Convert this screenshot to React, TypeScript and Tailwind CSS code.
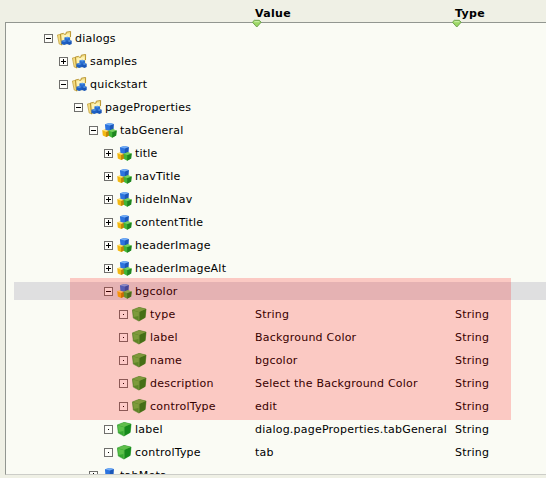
import React from "react";

type Kind = "folder" | "node" | "prop";
type Mark = "minus" | "plus" | "dot";

interface Item {
  level: number;
  mark: Mark;
  kind: Kind;
  name: string;
  value?: string;
  type?: string;
  selected?: boolean;
}

const items: Item[] = [
  { level: 0, mark: "minus", kind: "folder", name: "dialogs" },
  { level: 1, mark: "plus", kind: "folder", name: "samples" },
  { level: 1, mark: "minus", kind: "folder", name: "quickstart" },
  { level: 2, mark: "minus", kind: "folder", name: "pageProperties" },
  { level: 3, mark: "minus", kind: "node", name: "tabGeneral" },
  { level: 4, mark: "plus", kind: "node", name: "title" },
  { level: 4, mark: "plus", kind: "node", name: "navTitle" },
  { level: 4, mark: "plus", kind: "node", name: "hideInNav" },
  { level: 4, mark: "plus", kind: "node", name: "contentTitle" },
  { level: 4, mark: "plus", kind: "node", name: "headerImage" },
  { level: 4, mark: "plus", kind: "node", name: "headerImageAlt" },
  { level: 4, mark: "minus", kind: "node", name: "bgcolor", selected: true },
  { level: 5, mark: "dot", kind: "prop", name: "type", value: "String", type: "String" },
  { level: 5, mark: "dot", kind: "prop", name: "label", value: "Background Color", type: "String" },
  { level: 5, mark: "dot", kind: "prop", name: "name", value: "bgcolor", type: "String" },
  { level: 5, mark: "dot", kind: "prop", name: "description", value: "Select the Background Color", type: "String" },
  { level: 5, mark: "dot", kind: "prop", name: "controlType", value: "edit", type: "String" },
  { level: 4, mark: "dot", kind: "prop", name: "label", value: "dialog.pageProperties.tabGeneral", type: "String" },
  { level: 4, mark: "dot", kind: "prop", name: "controlType", value: "tab", type: "String" },
  { level: 3, mark: "plus", kind: "node", name: "tabMeta" },
];

const indents = ["pl-[38px]", "pl-[53px]", "pl-[68px]", "pl-[83px]", "pl-[98px]", "pl-[113px]"];

function Toggle({ mark }: { mark: Mark }) {
  return (
    <svg width="9" height="9" viewBox="0 0 9 9" shapeRendering="crispEdges" className="shrink-0">
      <rect x="0.5" y="0.5" width="8" height="8" fill="#fdfdf9" stroke="#6f6f6c" />
      {mark !== "dot" && <rect x="2" y="4" width="5" height="1" fill="#000" />}
      {mark === "plus" && <rect x="4" y="2" width="1" height="5" fill="#000" />}
      {mark === "dot" && <rect x="4" y="4" width="1" height="1" fill="#000" />}
    </svg>
  );
}

function FolderIcon() {
  return (
    <svg width="16" height="16" viewBox="0 0 16 16" className="shrink-0">
      <path d="M.4 4 3.4 3.4 5 13.8 2.2 13Z" fill="#f3dd84" stroke="#c09a30" strokeWidth=".7" />
      <path d="M3.4 3 6.6 2.4 7.8 3.4 9 3 9.3 1.2 13.6.5 13.5 12.4 4.6 14.2Z" fill="#f6e48f" />
      <path d="M4.8 4.4 12.4 3 12.4 9 5.6 12Z" fill="#fdf3b8" />
      <path d="M4.6 14.2 3.4 3 6.6 2.4 7.8 3.4 9 3 9.3 1.2 13.6.5 13.5 6" fill="none" stroke="#b38c22" strokeWidth=".9" />
      <path d="m10.2 5.7 2.8.7v3.2l-2.8.9-2.8-.9V6.4Z" fill="#2a6fd2" />
      <path d="m7.2 9.1 2.9.7v3.3l-2.9 1-2.8-1V9.8Z" fill="#1d5fc4" />
      <path d="m12.5 9.1 2.2.7v3.3l-2.2 1-2.6-1V9.8Z" fill="#1a57b8" />
      <path d="m7.8 6.6 2.4-.7 2.5.7-2.5.8ZM4.8 10l2.4-.7 2.4.7-2.4.8ZM10.3 10l2.1-.7 2 .7-2 .8Z" fill="#62a3ee" />
    </svg>
  );
}

function NodeIcon() {
  return (
    <svg width="16" height="16" viewBox="0.4 0.3 15.4 15.4" className="shrink-0">
      <path d="m.6 7.3 3.8-1.1 3.4 1.3-.5 4.8-3 1.5-3.1-1.5Z" fill="#f3b812" />
      <path d="m4.4 8.7 3.4-1.2-.5 4.8-3 1.5Z" fill="#be8509" />
      <path d="m.6 7.3 3.8-1.1 3.4 1.3-3.4 1.2Z" fill="#ffe173" />
      <path d="m3.2 1.5 4.4-1.1 4.1.9-.4 5.3-3.4 1.4L3.7 6.8Z" fill="#2d74df" />
      <path d="m7.9 2.8 3.8-1.5-.4 5.3-3.4 1.4Z" fill="#1b57b8" />
      <path d="m3.2 1.5 4.4-1.1 4.1.9-3.8 1.5Z" fill="#73adf5" />
      <path d="m6.7 7.8 4-1.5 3.8 1.1-.5 5-3.8 2-3-1.6Z" fill="#42b536" />
      <path d="m10.3 9 4.2-1.6-.5 5-3.8 2Z" fill="#1f8420" />
      <path d="m6.7 7.8 4-1.5 3.8 1.1L10.3 9Z" fill="#7bd062" />
    </svg>
  );
}

function PropIcon() {
  return (
    <svg width="16" height="16" viewBox="0 0.3 16 16" className="shrink-0">
      <path d="M.3 3.2 7.2.6l6.9 1.8-.9 8.4-6.3 3.6-5.6-3Z" fill="#36a830" stroke="#239128" strokeWidth=".5" />
      <path d="m7 5.4 7-3-.9 8.3-6.2 3.6Z" fill="#168a1c" />
      <path d="m.6 3.2 6.6-2.4 6.6 1.6L7 5.2Z" fill="#5fbe4b" />
      <path d="m1 3.7 5.6 1.9-.1 3.6-4.8 1.2Z" fill="#5cc24a" />
      <path d="M7 5.2v8.6" stroke="#7ed265" strokeWidth=".6" />
    </svg>
  );
}

const icons = { folder: FolderIcon, node: NodeIcon, prop: PropIcon };

function Row({ item }: { item: Item }) {
  const Icon = icons[item.kind];
  return (
    <div className="relative flex h-[23px] shrink-0">
      {item.selected && <div className="absolute top-[2px] right-0 bottom-[3px] left-2 bg-[#dfdfe0]" />}
      <div className={`relative flex w-[249px] shrink-0 ${indents[item.level]}`}>
        <div className="pt-[7px]"><Toggle mark={item.mark} /></div>
        <div className="ml-1 pt-1"><Icon /></div>
        <span className="ml-[2px] leading-[24px]">{item.name}</span>
      </div>
      <span className="w-[200px] shrink-0 leading-[24px]">{item.value}</span>
      <span className="leading-[24px]">{item.type}</span>
    </div>
  );
}

function ColumnHead({ label }: { label: string }) {
  return (
    <div className="relative w-[200px] shrink-0">
      <span className="leading-[28px]">{label}</span>
      <svg width="11" height="9" viewBox="0 0 11 9" className="absolute top-[19px] -left-[3px] z-10">
        <path d="M2.3 1.3h5L9.2 3.2 4.8 8 .4 3.2Z" fill="#9bd665" stroke="#6b9f4a" strokeWidth=".9" />
        <path d="M2.8 2h4L7.8 3.2H1.8Z" fill="#c6eda0" />
      </svg>
    </div>
  );
}

export default function App() {
  return (
    <div className="relative flex h-[478px] w-[546px] flex-col overflow-hidden bg-[#eff0e5] font-['DejaVu_Sans',sans-serif] text-[11px] tracking-[0.22px] whitespace-nowrap text-black">
      <div className="flex h-[22px] shrink-0 pl-[255px] font-bold tracking-[0.3px]">
        <ColumnHead label="Value" />
        <ColumnHead label="Type" />
      </div>
      <div className="ml-[5px] flex h-[453px] flex-col overflow-hidden border-t border-b border-l border-t-[#929690] border-b-[#cccdc8] border-l-[#929690] bg-[#fafbf4] pt-1">
        {items.map((item, index) => (
          <Row key={index} item={item} />
        ))}
      </div>
      <div className="pointer-events-none absolute top-[278px] left-[70px] h-[142px] w-[441px] bg-[#ff0000]/20" />
    </div>
  );
}
